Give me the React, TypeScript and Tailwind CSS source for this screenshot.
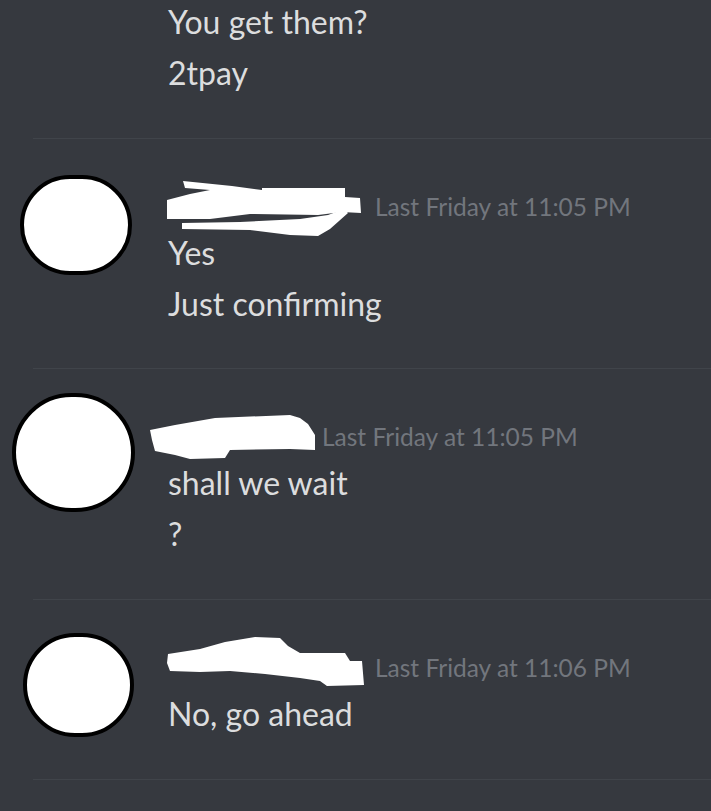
import React from 'react';

type Msg = {
  avatar: string;
  scribble: { className: string; w: number; points: string[] };
  tsGap: string;
  time: string;
  lines: string[];
};

const messages: Msg[] = [
  {
    avatar: 'ml-[20px] -mt-[10px] w-[112px] h-[100px]',
    scribble: {
      className: 'ml-0',
      w: 193,
      points: [
        '15,-4 64,1 94,5 94,3 177,3 177,12 192,13 193,28 174,27 150,30 82,29 42,34 -1,34 -1,15 22,9 42,5 17,3',
        '14,38 72,37 132,34 160,30 176,24 180,28 162,44 150,51 122,50 82,45 14,44',
      ],
    },
    tsGap: 'ml-[14px]',
    time: 'Last Friday at 11:05 PM',
    lines: ['Yes', 'Just confirming'],
  },
  {
    avatar: 'ml-[12px] -mt-[22px] w-[123px] h-[119px]',
    scribble: {
      className: '-ml-[18px]',
      w: 165,
      points: ['0,15 25,10 65,3 140,0 150,3 158,9 165,20 165,35 140,34 80,35 75,43 40,44 25,40 5,36 2,25'],
    },
    tsGap: 'ml-[7px]',
    time: 'Last Friday at 11:05 PM',
    lines: ['shall we wait', '?'],
  },
  {
    avatar: 'ml-[23px] -mt-[13px] w-[111px] h-[104px]',
    scribble: {
      className: '-ml-[1px]',
      w: 197,
      points: [
        '1,8 33,3 58,-4 88,-9 113,-8 121,0 133,7 178,7 183,15 195,15 197,39 160,40 153,35 133,32 98,28 63,25 33,26 3,25 0,17',
      ],
    },
    tsGap: 'ml-[11px]',
    time: 'Last Friday at 11:06 PM',
    lines: ['No, go ahead'],
  },
];

function Divider() {
  return <div className="ml-[33px] h-px bg-[#40444a] shrink-0" />;
}

export default function App() {
  return (
    <div className="min-h-screen w-full bg-[#36393f] text-[#dcddde] font-['Lato',sans-serif] flex flex-col overflow-hidden">
      {/* tail of the previous message */}
      <div className="pl-[168px] -mt-[4px] pb-[40px] text-[32px] leading-[51px]">
        <div>You get them?</div>
        <div>2tpay</div>
      </div>
      <Divider />

      {messages.map((m, i) => (
        <React.Fragment key={i}>
          <div className={`flex pt-[46px] ${i === 0 ? 'pb-[39px]' : 'pb-[40px]'}`}>
            <div className="w-[168px] shrink-0">
              <div className={`${m.avatar} rounded-full bg-white border-[4px] border-black`} />
            </div>
            <div className="flex flex-col">
              <div className="flex items-center h-[44px]">
                <svg
                  width={m.scribble.w}
                  height={44}
                  viewBox={`0 0 ${m.scribble.w} 44`}
                  className={`${m.scribble.className} shrink-0 overflow-visible`}
                >
                  {m.scribble.points.map((p, k) => (
                    <polygon key={k} points={p} fill="#ffffff" />
                  ))}
                </svg>
                <span className={`${m.tsGap} text-[24.5px] text-[#72767d] whitespace-nowrap`}>{m.time}</span>
              </div>
              <div className="-mt-[2px] text-[32px] leading-[51px]">
                {m.lines.map((l, j) => (
                  <div key={j}>{l}</div>
                ))}
              </div>
            </div>
          </div>
          <Divider />
        </React.Fragment>
      ))}
    </div>
  );
}
